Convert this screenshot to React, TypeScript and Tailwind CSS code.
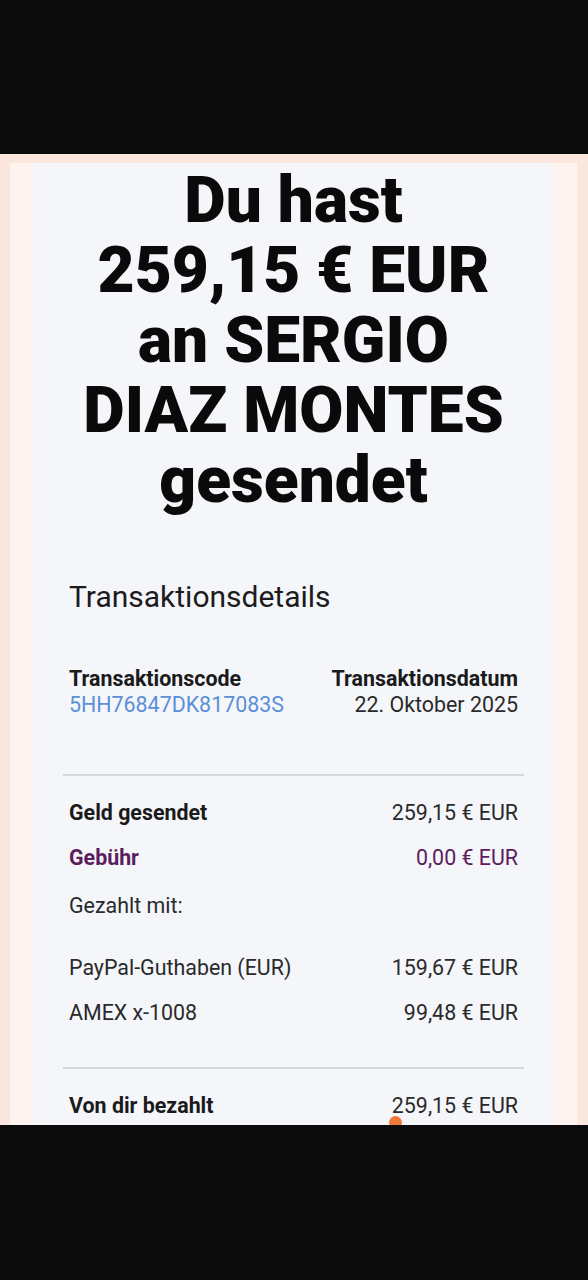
export default function App() {
  const font = { fontFamily: 'Roboto, "Liberation Sans", sans-serif' };
  return (
    <div className="w-[588px] h-[1280px] bg-[#0b0b0b] flex flex-col" style={font}>
      <div className="h-[154px] bg-[#0b0b0b]" />
      <div className="relative h-[971px] overflow-hidden bg-[#fbe6de] pt-[9px] pl-[10px] pr-[11px]">
        <div className="h-full bg-[#fdf4f0] px-[24px]">
          <div className="h-full bg-[#f4f6fa] pt-[3px]">
            <h1 className="text-center text-[64px] leading-[70px] font-black text-[#0a0a0a]">
              Du hast
              <br />
              259,15 € EUR
              <br />
              an SERGIO
              <br />
              DIAZ MONTES
              <br />
              gesendet
            </h1>
            <div className="px-[35px]">
              <div className="mt-[63px] text-[30px] leading-[36px] text-[#1c1c1c]">Transaktionsdetails</div>
              <div className="mt-[51px] flex justify-between text-[21.4px] leading-[26px]">
                <div>
                  <div className="font-bold text-[#1a1a1a]">Transaktionscode</div>
                  <div className="text-[#5b8fd6]">5HH76847DK817083S</div>
                </div>
                <div className="text-right">
                  <div className="font-bold text-[#1a1a1a]">Transaktionsdatum</div>
                  <div className="text-[#2a2a2a]">22. Oktober 2025</div>
                </div>
              </div>
            </div>
            <div className="mx-[29px] mt-[56px] h-[2px] bg-[#d5d7dc]" />
            <div className="px-[35px] text-[21.4px] leading-[26px] text-[#2a2a2a]">
              <div className="mt-[24px] flex justify-between">
                <span className="font-bold text-[#1a1a1a]">Geld gesendet</span>
                <span>259,15 € EUR</span>
              </div>
              <div className="mt-[19px] flex justify-between text-[#5b1d5e]">
                <span className="font-bold">Gebühr</span>
                <span>0,00 € EUR</span>
              </div>
              <div className="mt-[22px]">Gezahlt mit:</div>
              <div className="mt-[36px] flex justify-between">
                <span>PayPal-Guthaben (EUR)</span>
                <span>159,67 € EUR</span>
              </div>
              <div className="mt-[19px] flex justify-between">
                <span>AMEX x-1008</span>
                <span>99,48 € EUR</span>
              </div>
            </div>
            <div className="mx-[29px] mt-[41px] h-[2px] bg-[#d5d7dc]" />
            <div className="px-[35px] text-[21.4px] leading-[26px] text-[#2a2a2a]">
              <div className="mt-[24px] flex justify-between">
                <span className="font-bold text-[#1a1a1a]">Von dir bezahlt</span>
                <span>259,15 € EUR</span>
              </div>
            </div>
          </div>
        </div>
        <div className="absolute left-[389px] top-[962px] w-[13px] h-[13px] rounded-full bg-[#f07a3c]" />
      </div>
      <div className="flex-1 bg-[#0b0b0b]" />
    </div>
  );
}
